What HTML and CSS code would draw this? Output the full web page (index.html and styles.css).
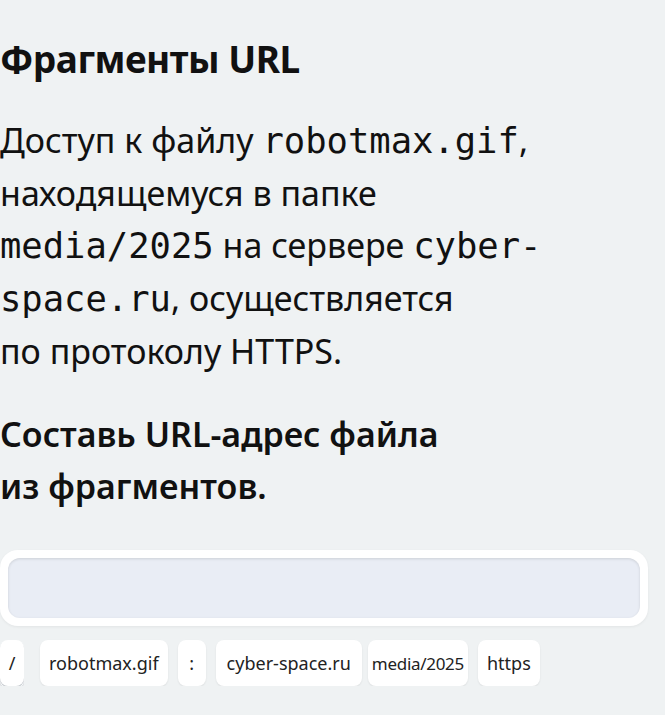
FILE: index.html
```html
<!DOCTYPE html>
<html lang="ru">
<head>
<meta charset="utf-8">
<link rel="stylesheet" href="styles.css">
</head>
<body>
<main class="task">
  <h1 class="title">Фрагменты URL</h1>
  <p class="text">Доступ к&nbsp;файлу <code>robotmax.gif</code>, находящемуся в&nbsp;папке <code>media/2025</code> на&nbsp;сервере <code>cyber-space.ru</code>, осуществляется по&nbsp;протоколу HTTPS.</p>
  <p class="question">Составь URL-адрес файла<br>из фрагментов.</p>
  <div class="answer"><div class="answer-inner"></div></div>
  <div class="chips">
    <div class="chip chip-stack">/</div>
    <div class="chip">robotmax.gif</div>
    <div class="chip chip-min">:</div>
    <div class="chip chip-tight">cyber-space.ru</div>
    <div class="chip chip-narrow">media/2025</div>
    <div class="chip">https</div>
  </div>
</main>
</body>
</html>
```
FILE: styles.css
```css
html, body {
  margin: 0;
  padding: 0;
  background: #eff2f3;
}
.task {
  width: 648px;
  font-family: "Noto Sans", sans-serif;
  color: #111;
  padding-top: 34px;
}
.title {
  margin: 0;
  font-size: 37px;
  font-weight: 700;
  line-height: 50px;
  letter-spacing: -0.5px;
}
.text {
  margin: 30px 0 0;
  font-size: 34px;
  line-height: 52px;
  width: 560px;
}
.text code {
  font-family: "DejaVu Sans Mono", monospace;
  font-size: 35.5px;
}
.question {
  margin: 31px 0 0;
  font-size: 34px;
  font-weight: 600;
  line-height: 52px;
}
.answer {
  margin-top: 38px;
  background: #fff;
  border-radius: 18px;
  padding: 8px;
  box-shadow: 0 1px 3px rgba(0,0,0,0.06);
}
.answer-inner {
  height: 60px;
  background: #e9edf5;
  border-radius: 12px;
  box-shadow: inset 0 1px 3px rgba(0,0,0,0.12);
}
.chips {
  display: flex;
  gap: 10px;
  margin-top: 14px;
  align-items: flex-start;
}
.chip {
  background: #fff;
  border-radius: 8px;
  height: 46px;
  padding: 0 9px;
  display: flex;
  align-items: center;
  justify-content: center;
  font-size: 18px;
  color: #222;
  box-shadow: 0 1px 2px rgba(0,0,0,0.08);
}
.chip-stack {
  min-width: 24px;
  padding: 0;
  margin-right: 6px;
  box-shadow: 0 1px 0 #bfc4c9, 0 3px 0 #f7f8f9, 0 4px 0 #bfc4c9, 0 6px 0 #f7f8f9, 0 7px 0 #bfc4c9, 0 9px 0 #f7f8f9, 0 10px 0 #bcc1c6;
}
.chip-min {
  min-width: 28px;
  padding: 0;
}
.chip-tight {
  padding: 0 11px;
  margin-right: -4px;
}
.chip-narrow {
  font-size: 17px;
  padding: 0 4px;
  letter-spacing: -0.3px;
}
```
